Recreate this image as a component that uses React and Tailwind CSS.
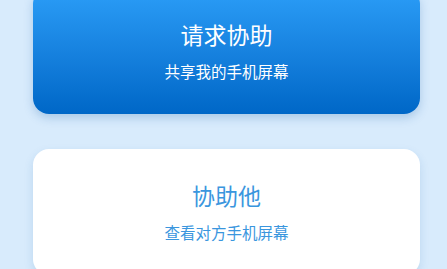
export default function App() {
  return (
    <div
      className="w-[447px] h-[269px] overflow-hidden bg-[#d8ebfc]"
      style={{ fontFamily: '"Noto Sans CJK SC", "Noto Sans", sans-serif' }}
    >
      <div className="-mt-[12px] ml-[33px] w-[387px] flex flex-col gap-[35px]">
        <div className="h-[126px] rounded-[16px] bg-gradient-to-b from-[#2b9ef8] to-[#0067c7] shadow-[0_4px_10px_rgba(30,100,170,0.25)] flex flex-col items-center justify-center gap-[14px]">
          <div className="text-[23px] leading-[26px] text-white">请求协助</div>
          <div className="text-[15.5px] leading-[20px] text-white">共享我的手机屏幕</div>
        </div>
        <div className="h-[126px] rounded-[16px] bg-white shadow-[0_4px_10px_rgba(30,100,170,0.15)] flex flex-col items-center justify-center gap-[14px]">
          <div className="text-[23px] leading-[26px] text-[#3a96de]">协助他</div>
          <div className="text-[15.5px] leading-[20px] text-[#3a96de]">查看对方手机屏幕</div>
        </div>
      </div>
    </div>
  );
}
